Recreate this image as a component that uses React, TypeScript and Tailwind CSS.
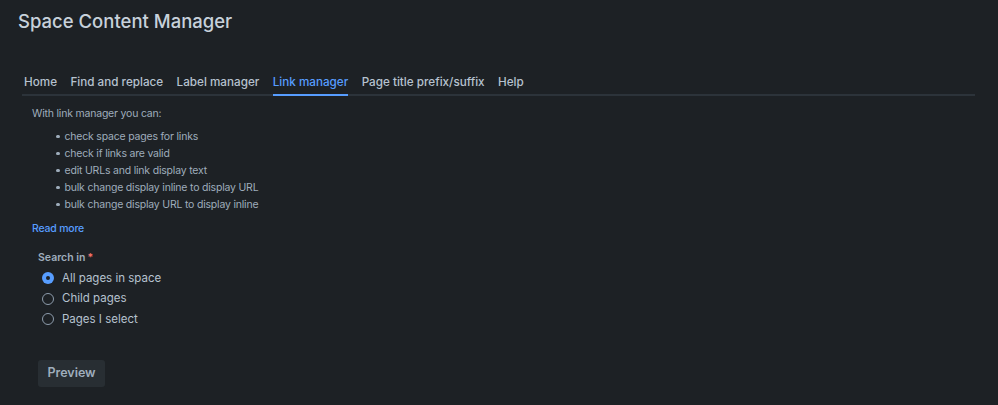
const TABS = ['Home', 'Find and replace', 'Label manager', 'Link manager', 'Page title prefix/suffix', 'Help'];

const FEATURES = [
  'check space pages for links',
  'check if links are valid',
  'edit URLs and link display text',
  'bulk change display inline to display URL',
  'bulk change display URL to display inline',
];

const SCOPES = ['All pages in space', 'Child pages', 'Pages I select'];

function Radio({ checked, label }: { checked: boolean; label: string }) {
  return (
    <label className="flex h-[20.5px] items-center gap-[8px]">
      {checked ? (
        <span className="flex h-[12px] w-[12px] items-center justify-center rounded-full bg-[#579dff]">
          <span className="h-[4px] w-[4px] rounded-full bg-[#1d2125]" />
        </span>
      ) : (
        <span className="h-[12px] w-[12px] rounded-full border-[1.5px] border-[#8c9bab]" />
      )}
      <span className="text-[11.5px] text-[#b6c2cf]">{label}</span>
    </label>
  );
}

export default function App() {
  const active = 'Link manager';
  return (
    <div
      className="h-[405px] w-[998px] overflow-hidden bg-[#1d2125] px-[18px] pt-[7px]"
      style={{ fontFamily: 'Inter, "Noto Sans", sans-serif' }}
    >
      <h1 className="text-[18.5px] leading-[28px] font-medium text-[#c7d1db]">Space Content Manager</h1>

      <nav className="mt-[35px] ml-[4px] flex w-[953px] gap-[13.4px] border-b-2 border-[#2c333a] pl-[2px]">
        {TABS.map((t) => (
          <span
            key={t}
            className={
              t === active
                ? '-mb-[2px] flex h-[26px] items-center border-b-2 border-[#579dff] pt-[1px] text-[11.7px] font-medium text-[#579dff]'
                : 'flex h-[24px] items-center pt-[1px] text-[11.7px] font-medium text-[#b6c2cf]'
            }
          >
            {t}
          </span>
        ))}
      </nav>

      <div className="pl-[14px] pt-[9px] text-[10.5px] leading-[17px] tracking-[-0.2px] text-[#9fadbc]">
        <p>With link manager you can:</p>
        <ul className="mt-[6px] pl-[24px]">
          {FEATURES.map((f) => (
            <li key={f} className="flex items-center gap-[5px]">
              <span className="h-[3.5px] w-[3.5px] rounded-full bg-[#9fadbc]" />
              {f}
            </li>
          ))}
        </ul>
        <a className="mt-[7px] block font-medium text-[#579dff]">Read more</a>
      </div>

      <div className="pl-[20px] pt-[12px]">
        <div className="text-[10.5px] leading-[17px] font-semibold text-[#9fadbc]">
          Search in<span className="ml-[2px] text-[#f87168]">*</span>
        </div>
        <div className="mt-[2px] ml-[4px] flex flex-col">
          {SCOPES.map((s, i) => (
            <Radio key={s} checked={i === 0} label={s} />
          ))}
        </div>
        <button className="mt-[30px] flex h-[27px] w-[67px] items-center justify-center rounded-[3px] bg-[#282e33] text-[12.5px] font-semibold text-[#9fadbc]">
          Preview
        </button>
      </div>
    </div>
  );
}
